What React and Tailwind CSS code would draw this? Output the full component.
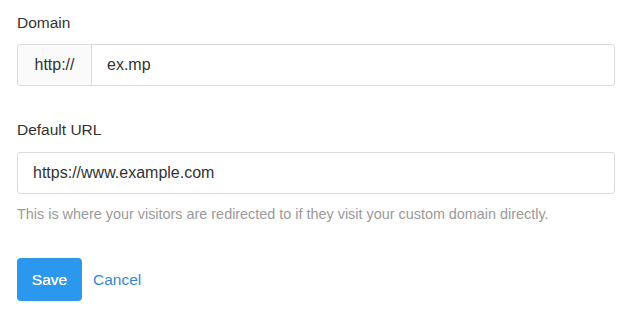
export default function App() {
  return (
    <div className="min-h-screen bg-white px-[17px] pt-[12px] font-['Liberation_Sans',Arial,sans-serif] text-[#333]">
      <form className="w-[598px]">
        <label className="block text-[15.5px] leading-[22px]">Domain</label>
        <div className="mt-[10px] flex h-[42px] rounded-[3px] border border-[#dcdcdc]">
          <span className="flex w-[74px] items-center justify-center rounded-l-[3px] border-r border-[#dcdcdc] bg-[#fafafa] text-[16px]">
            http://
          </span>
          <input
            className="flex-1 bg-transparent px-[15px] text-[16px] text-[#333] outline-none"
            defaultValue="ex.mp"
          />
        </div>

        <label className="mt-[33px] block text-[15.5px] leading-[22px]">Default URL</label>
        <input
          className="mt-[11px] block h-[42px] w-full rounded-[3px] border border-[#dcdcdc] px-[15px] text-[16px] text-[#333] outline-none"
          defaultValue="https://www.example.com"
        />
        <p className="mt-[11px] text-[14.4px] leading-[18px] text-[#9a9a9a]">
          This is where your visitors are redirected to if they visit your custom domain directly.
        </p>

        <div className="mt-[35px] flex items-center gap-[11px]">
          <button
            type="button"
            className="h-[43px] w-[65px] rounded-[4px] bg-[#2b98ee] text-[15.5px] text-white [text-shadow:0_0_0.4px_#fff]"
          >
            Save
          </button>
          <a href="#" className="text-[15.5px] text-[#3a86d4]">
            Cancel
          </a>
        </div>
      </form>
    </div>
  )
}
